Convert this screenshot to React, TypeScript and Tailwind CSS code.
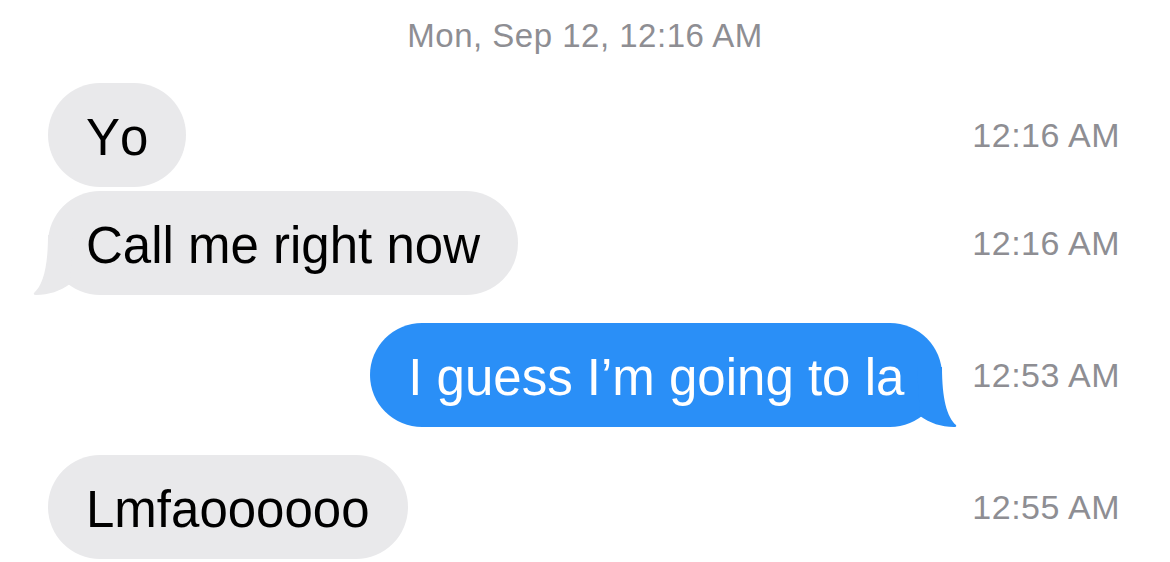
const messages = [
  { text: 'Yo', time: '12:16 AM', mine: false, tail: false, gap: 'mt-[27px]' },
  { text: 'Call me right now', time: '12:16 AM', mine: false, tail: true, gap: 'mt-[4px]' },
  { text: 'I guess I’m going to la', time: '12:53 AM', mine: true, tail: true, gap: 'mt-[28px]' },
  { text: 'Lmfaoooooo', time: '12:55 AM', mine: false, tail: false, gap: 'mt-[28px]' },
];

function Tail({ mine }: { mine: boolean }) {
  const path = 'M15 0 C15 32 10 50 1 58 Q0 60 3 60 C16 60 27 56 37 49 L40 0 Z';
  return (
    <svg
      width="45"
      height="60"
      viewBox="0 0 45 60"
      className={mine ? 'absolute bottom-0 right-[-15px]' : 'absolute bottom-0 left-[-15px]'}
    >
      {mine ? (
        <g transform="translate(45,0) scale(-1,1)">
          <path d={path} fill="#2a8ff7" />
        </g>
      ) : (
        <path d={path} fill="#e9e9eb" />
      )}
    </svg>
  );
}

export default function App() {
  return (
    <div className="w-[1170px] h-[562px] bg-white overflow-hidden font-['Liberation_Sans',Arial,sans-serif]">
      <div className="pt-[16px] text-center text-[33px] leading-[40px] tracking-[0.5px] text-[#8e8e93]">
        Mon, Sep 12, 12:16 AM
      </div>

      {messages.map((m, i) => (
        <div key={i} className={`flex items-center pl-[48px] pr-[50px] ${m.gap}`}>
          <div className={`flex flex-1 ${m.mine ? 'justify-end' : 'justify-start'}`}>
            <div
              className={`relative flex h-[104px] items-center rounded-full px-[38px] pt-[4px] text-[51px] leading-[55px] [font-kerning:none] ${
                m.mine ? 'bg-[#2a8ff7] text-white' : 'bg-[#e9e9eb] text-black'
              }`}
            >
              {m.tail && <Tail mine={m.mine} />}
              <span className="relative whitespace-nowrap">{m.text}</span>
            </div>
          </div>
          <div className="ml-[30px] whitespace-nowrap text-[34px] leading-[40px] tracking-[0.5px] text-[#8e8e93]">
            {m.time}
          </div>
        </div>
      ))}
    </div>
  );
}
